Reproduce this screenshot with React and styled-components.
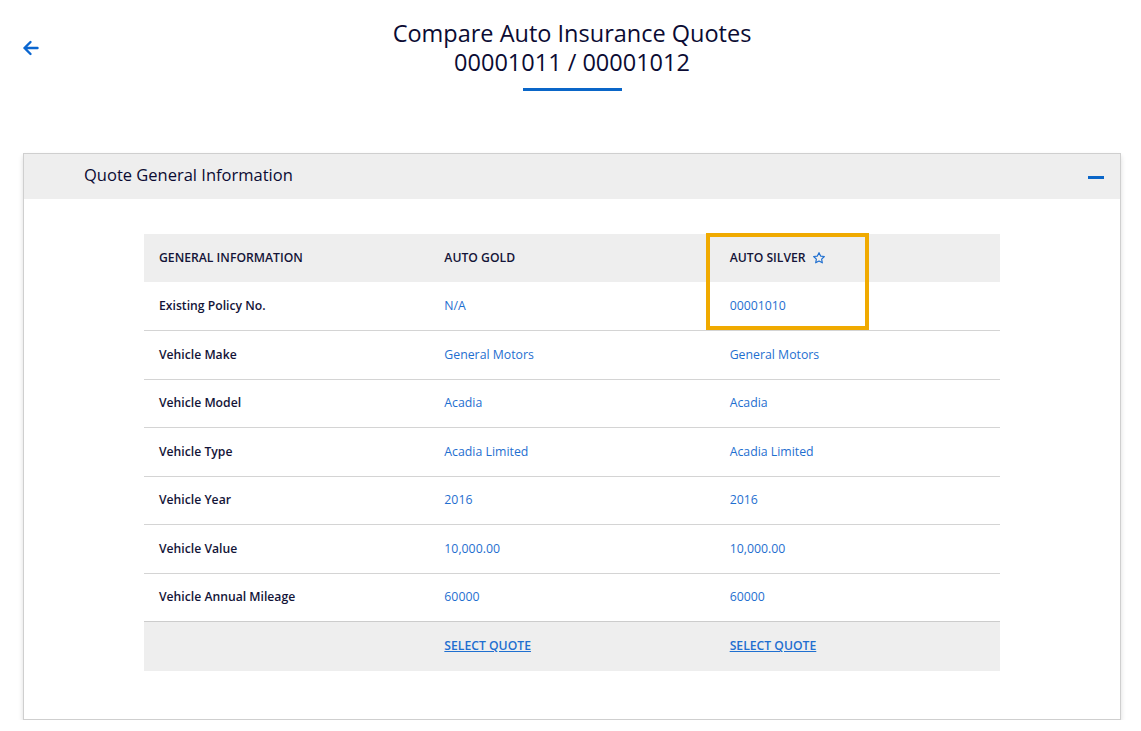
import React from "react";
import styled, { createGlobalStyle } from "styled-components";

const Global = createGlobalStyle`
  html, body { margin: 0; padding: 0; background: #fff; }
  body { font-family: "Open Sans", "Noto Sans", Arial, sans-serif; color: #0b0b33; }
`;

const Page = styled.div`
  padding: 19px 20px 0 23px;
`;

const TopBar = styled.header`
  position: relative;
  display: flex;
  flex-direction: column;
  align-items: center;
`;

const BackButton = styled.button`
  position: absolute;
  left: -1px;
  top: 21px;
  border: 0;
  background: none;
  padding: 0;
  cursor: pointer;
  display: flex;
  color: #0a66d0;
`;

const Title = styled.h1`
  margin: 0;
  font-size: 23.5px;
  font-weight: 500;
  text-align: center;
  color: #0b0b33;
`;

const TitleLine = styled.span`
  display: block;
  line-height: 29px;
`;

const Underline = styled.div`
  width: 99px;
  height: 3px;
  background: #0a66c8;
  margin-top: 11px;
`;

const Card = styled.section`
  margin-top: 62px;
  width: 1096px;
  border: 1px solid #cfcfcf;
  box-shadow: 0 3px 5px rgba(0, 0, 0, 0.14);
  background: #fff;
`;

const CardHeader = styled.div`
  height: 45px;
  background: #eeeeee;
  display: flex;
  align-items: center;
  justify-content: space-between;
  padding: 0 16px 0 60px;
`;

const CardTitle = styled.h2`
  margin: 0 0 5px;
  font-size: 16.5px;
  font-weight: 500;
  color: #0b0b33;
`;

const Minus = styled.span`
  display: block;
  width: 16px;
  height: 3px;
  background: #0a66c8;
  margin-top: 2px;
`;

const CardBody = styled.div`
  padding: 35px 120px 48px 120px;
`;

const TableWrap = styled.div`
  position: relative;
`;

const Table = styled.table`
  width: 100%;
  border-collapse: collapse;
  table-layout: fixed;
  font-size: 12.2px;
`;

const HeadRow = styled.tr`
  background: #eeeeee;
  height: 48px;
`;

const Th = styled.th`
  text-align: left;
  padding: 0 15px 1px;
  font-weight: 600;
  text-transform: uppercase;
  color: #141438;
`;

const Row = styled.tr`
  height: 48.5px;
  border-bottom: 1px solid #d4d4d4;
  &:last-child { border-bottom: 0; }
`;

const Label = styled.td`
  padding: 0 15px 1px;
  font-weight: 600;
  color: #141438;
`;

const Value = styled.td`
  padding: 0 15px 1px;
  font-size: 12.3px;
  color: #1f6fd0;
`;

const FootRow = styled.tr`
  background: #eeeeee;
  height: 49px;
  border-top: 1px solid #cccccc;
`;

const SelectLink = styled.a`
  color: #1f6fd0;
  font-size: 12.2px;
  font-weight: 600;
  text-decoration: underline;
  text-transform: uppercase;
  cursor: pointer;
`;

const HeadInner = styled.span`
  display: inline-flex;
  align-items: center;
  gap: 6px;
`;

const Highlight = styled.div`
  position: absolute;
  left: 562px;
  top: -1px;
  width: 155px;
  height: 89px;
  border: 4px solid #f0aa00;
  pointer-events: none;
`;

const rows = [
  ["Existing Policy No.", "N/A", "00001010"],
  ["Vehicle Make", "General Motors", "General Motors"],
  ["Vehicle Model", "Acadia", "Acadia"],
  ["Vehicle Type", "Acadia Limited", "Acadia Limited"],
  ["Vehicle Year", "2016", "2016"],
  ["Vehicle Value", "10,000.00", "10,000.00"],
  ["Vehicle Annual Mileage", "60000", "60000"],
];

const Star = () => (
  <svg width="14" height="14" viewBox="0 0 24 24" fill="none" stroke="#1f6fd0" strokeWidth="2" strokeLinejoin="round">
    <path d="M12 2.8l2.8 5.9 6.4.8-4.7 4.4 1.2 6.4L12 17.2l-5.7 3.1 1.2-6.4-4.7-4.4 6.4-.8z" />
  </svg>
);

export default function App() {
  return (
    <>
      <Global />
      <Page>
        <TopBar>
          <BackButton aria-label="Back">
            <svg width="17" height="16" viewBox="0 0 17 16" fill="none" stroke="#0a66d0" strokeWidth="2.4" strokeLinecap="round" strokeLinejoin="round">
              <path d="M15.5 8H2.5M8.5 2L2.5 8l6 6" />
            </svg>
          </BackButton>
          <Title>
            <TitleLine>Compare Auto Insurance Quotes</TitleLine>
            <TitleLine>00001011 / 00001012</TitleLine>
          </Title>
          <Underline />
        </TopBar>
        <Card>
          <CardHeader>
            <CardTitle>Quote General Information</CardTitle>
            <Minus />
          </CardHeader>
          <CardBody>
            <TableWrap>
              <Table>
                <thead>
                  <HeadRow>
                    <Th>General Information</Th>
                    <Th>Auto Gold</Th>
                    <Th>
                      <HeadInner>
                        Auto Silver <Star />
                      </HeadInner>
                    </Th>
                  </HeadRow>
                </thead>
                <tbody>
                  {rows.map(([l, a, b]) => (
                    <Row key={l}>
                      <Label>{l}</Label>
                      <Value>{a}</Value>
                      <Value>{b}</Value>
                    </Row>
                  ))}
                </tbody>
                <tfoot>
                  <FootRow>
                    <Label />
                    <Value>
                      <SelectLink>Select Quote</SelectLink>
                    </Value>
                    <Value>
                      <SelectLink>Select Quote</SelectLink>
                    </Value>
                  </FootRow>
                </tfoot>
              </Table>
              <Highlight />
            </TableWrap>
          </CardBody>
        </Card>
      </Page>
    </>
  );
}
